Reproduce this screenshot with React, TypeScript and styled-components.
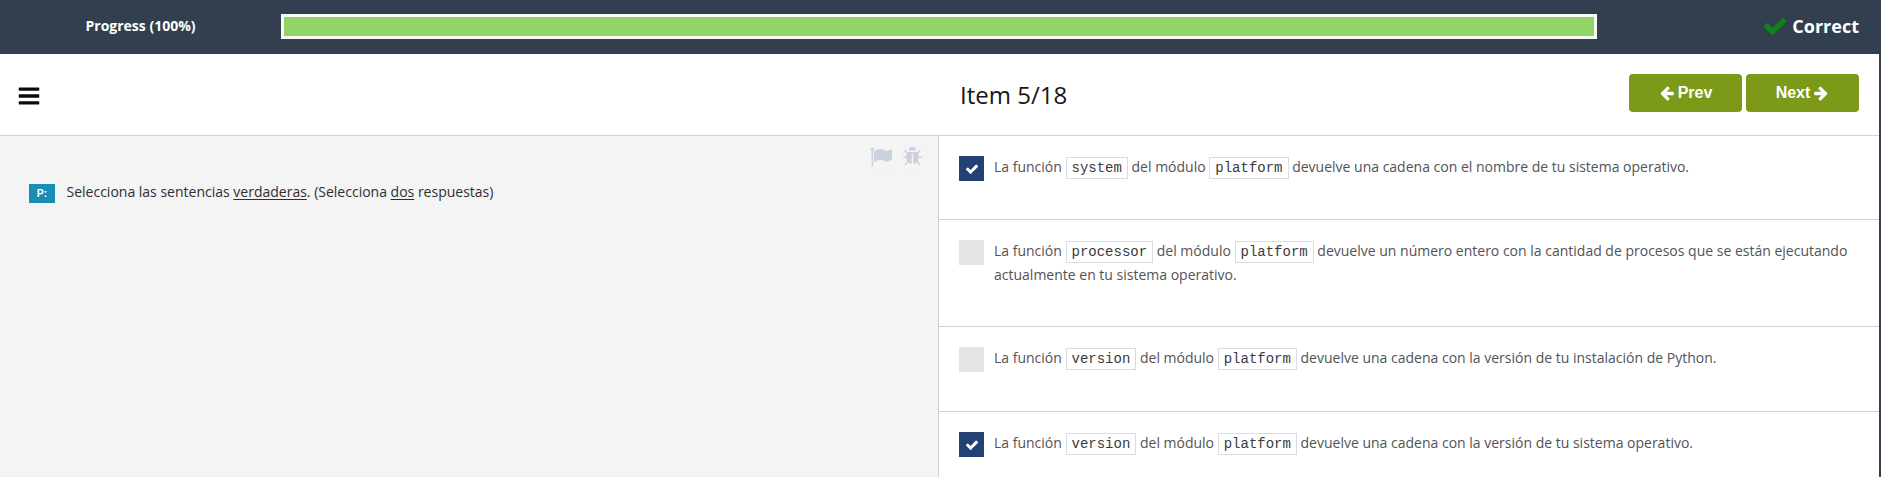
import React from 'react';
import styled, { createGlobalStyle } from 'styled-components';

const GlobalStyle = createGlobalStyle`
  *, *::before, *::after { box-sizing: border-box; }
  html, body { margin: 0; padding: 0; height: 100%; overflow: hidden; background: #313f4e; }
  body { font-family: "Open Sans", sans-serif; font-size: 14px; color: #222; }
`;

const ICONS = {
  check:
    'M1671 566q0 40-28 68l-724 724-136 136q-28 28-68 28t-68-28l-136-136-362-362q-28-28-28-68t28-68l136-136q28-28 68-28t68 28l294 295 656-657q28-28 68-28t68 28l136 136q28 28 28 68z',
  left:
    'M1664 896v128q0 53-32.5 90.5t-84.5 37.5h-704l293 294q38 36 38 90t-38 90l-75 76q-37 37-90 37-52 0-91-37l-651-652q-37-37-37-90 0-52 37-91l651-650q38-38 91-38 52 0 90 38l75 74q38 38 38 91t-38 91l-293 293h704q52 0 84.5 37.5t32.5 90.5z',
  right:
    'M1600 960q0 54-37 91l-651 651q-39 37-91 37-51 0-90-37l-75-75q-38-38-38-91t38-91l293-293h-704q-52 0-84.5-37.5t-32.5-90.5v-128q0-53 32.5-90.5t84.5-37.5h704l-293-294q-38-36-38-90t38-90l75-75q38-38 90-38 53 0 91 38l651 651q37 35 37 90z',
  bars:
    'M1664 1344v128q0 26-19 45t-45 19h-1408q-26 0-45-19t-19-45v-128q0-26 19-45t45-19h1408q26 0 45 19t19 45zm0-512v128q0 26-19 45t-45 19h-1408q-26 0-45-19t-19-45v-128q0-26 19-45t45-19h1408q26 0 45 19t19 45zm0-512v128q0 26-19 45t-45 19h-1408q-26 0-45-19t-19-45v-128q0-26 19-45t45-19h1408q26 0 45 19t19 45z',
  flag:
    'M320 256q0 72-64 110v1266q0 13-9.5 22.5t-22.5 9.5h-64q-13 0-22.5-9.5t-9.5-22.5v-1266q-64-38-64-110 0-53 37.5-90.5t90.5-37.5 90.5 37.5 37.5 90.5zm1472 64v763q0 25-12.5 38.5t-39.5 27.5q-215 116-369 116-61 0-123.5-22t-108.5-48-115.5-48-142.5-22q-192 0-464 146-17 9-33 9-26 0-45-19t-19-45v-742q0-32 31-55 21-14 79-43 236-120 421-120 107 0 200 29t219 88q38 19 88 19 54 0 117.5-21t110-47 88-47 54.5-21q26 0 45 19t19 45z',
  bug:
    'M1696 960q0 26-19 45t-45 19h-224q0 171-67 290l208 209q19 19 19 45t-19 45q-18 19-45 19t-45-19l-198-197q-5 5-15 13t-42 28.5-65 36.5-82 29-97 13v-896h-128v896q-51 0-101.5-13.5t-87-33-66-39-43.5-32.5l-15-14-183 207q-20 21-48 21-24 0-43-16-19-18-20.5-44.5t15.5-46.5l202-227q-58-114-58-274h-224q-26 0-45-19t-19-45 19-45 45-19h224v-294l-173-173q-19-19-19-45t19-45 45-19 45 19l173 173h844l173-173q19-19 45-19t45 19 19 45-19 45l-173 173v294h224q26 0 45 19t19 45zm-480-576h-640q0-133 93.5-226.5t226.5-93.5 226.5 93.5 93.5 226.5z',
};

const Svg = styled.svg<{ $size: number }>`
  display: block;
  flex: none;
  width: ${(p) => p.$size}px;
  height: ${(p) => p.$size}px;
  fill: currentColor;
`;

function Icon({ name, size }: { name: keyof typeof ICONS; size: number }) {
  return (
    <Svg $size={size} viewBox="0 0 1792 1792" aria-hidden="true">
      <path d={ICONS[name]} />
    </Svg>
  );
}

const Page = styled.div`
  display: flex;
  flex-direction: column;
  height: 477px;
`;

const TopBar = styled.header`
  display: flex;
  flex: none;
  height: 54px;
  padding: 0 22px 0 0;
  background: #313f4e;
  color: #fff;
`;

const ProgressLabel = styled.div`
  width: 281px;
  padding-top: 16px;
  text-align: center;
  font-size: 14px;
  line-height: 20px;
  font-weight: 700;
`;

const ProgressTrack = styled.div`
  width: 1316px;
  height: 25px;
  margin-top: 14px;
  border: 3px solid #f7faf6;
`;

const ProgressFill = styled.div`
  height: 100%;
  background: #90d468;
`;

const Result = styled.div`
  display: flex;
  align-items: center;
  gap: 4px;
  height: 27px;
  margin: 12px 0 0 auto;
  font-size: 18px;
  font-weight: 700;
`;

const ResultIcon = styled.span`
  color: #0f8116;
`;

const Sheet = styled.main`
  display: flex;
  flex: 1;
  flex-direction: column;
  min-height: 0;
  margin-right: 2px;
  background: #fff;
`;

const Toolbar = styled.div`
  display: grid;
  grid-template-columns: 960px 1fr auto;
  flex: none;
  height: 82px;
  padding-right: 20px;
  border-bottom: 1px solid #d0d1d3;
`;

const MenuButton = styled.button`
  justify-self: start;
  align-self: start;
  margin: 29.5px 0 0 17.3px;
  padding: 0;
  border: 0;
  background: none;
  color: #0b0b0e;
`;

const Title = styled.h1`
  margin: 24px 0 0;
  font-size: 24px;
  line-height: 34px;
  font-weight: 400;
  color: #161616;
`;

const Nav = styled.nav`
  display: flex;
  gap: 4px;
  padding-top: 20px;
`;

const NavButton = styled.button`
  display: flex;
  align-items: center;
  justify-content: center;
  gap: 3px;
  width: 113px;
  height: 38px;
  padding: 0 0 1px;
  border: 0;
  border-radius: 4px;
  background: #7c9a18;
  color: #fff;
  font: 700 16px "Liberation Sans", Arial, sans-serif;
`;

const Columns = styled.div`
  display: grid;
  grid-template-columns: 939px 1fr;
  flex: 1;
  min-height: 0;
`;

const QuestionPane = styled.section`
  padding: 10px 15px 0 29px;
  border-right: 1px solid #cfd0d2;
  background: #f4f4f4;
`;

const Tools = styled.div`
  display: flex;
  justify-content: flex-end;
  gap: 6px;
  height: 38px;
`;

const Tool = styled.span<{ $width: number }>`
  width: ${(p) => p.$width}px;
  height: 25px;
  border-bottom: 1px dotted #e8e9ed;
  color: #cbd2de;
`;

const Question = styled.div`
  display: flex;
  gap: 11.5px;
`;

const Badge = styled.span`
  width: 26px;
  height: 19px;
  background: #198eb5;
  color: #fff;
  font: 700 10.5px/18px "Liberation Sans", Arial, sans-serif;
  text-align: center;
`;

const QuestionText = styled.p`
  margin: -4px 0 0;
  font-size: 14px;
  line-height: 24px;
  color: #2e2f33;

  u {
    text-underline-offset: 2px;
  }
`;

const Answers = styled.section`
  display: grid;
  grid-template-rows: 84px 107px 85px 85px;
  overflow: hidden;
`;

const Answer = styled.label`
  display: flex;
  gap: 10px;
  padding: 20px 20px 0;
  border-bottom: 1px solid #cfd0d2;
`;

const Box = styled.span<{ $on: boolean }>`
  display: flex;
  align-items: center;
  justify-content: center;
  flex: none;
  width: 25px;
  height: 25px;
  padding-top: 1px;
  background: ${(p) => (p.$on ? '#234172' : '#e4e4e4')};
  color: #fff;
`;

const AnswerText = styled.p`
  margin: -1px 0 0;
  font-size: 14px;
  line-height: 24px;
  color: #525356;
`;

const Code = styled.code`
  padding: 2px 5px;
  border: 1px solid #dadcdf;
  font-family: "Liberation Mono", "Courier New", monospace;
  font-size: 14px;
  line-height: 1;
  color: #3a3a3e;
`;

const answers = [
  { on: true, fn: 'system', text: 'devuelve una cadena con el nombre de tu sistema operativo.' },
  {
    on: false,
    fn: 'processor',
    text: 'devuelve un número entero con la cantidad de procesos que se están ejecutando actualmente en tu sistema operativo.',
  },
  { on: false, fn: 'version', text: 'devuelve una cadena con la versión de tu instalación de Python.' },
  { on: true, fn: 'version', text: 'devuelve una cadena con la versión de tu sistema operativo.' },
];

export default function App() {
  return (
    <Page>
      <GlobalStyle />
      <TopBar>
        <ProgressLabel>Progress (100%)</ProgressLabel>
        <ProgressTrack>
          <ProgressFill />
        </ProgressTrack>
        <Result>
          <ResultIcon>
            <Icon name="check" size={26} />
          </ResultIcon>
          Correct
        </Result>
      </TopBar>
      <Sheet>
        <Toolbar>
          <MenuButton aria-label="Menu">
            <Icon name="bars" size={24} />
          </MenuButton>
          <Title>Item 5/18</Title>
          <Nav>
            <NavButton>
              <Icon name="left" size={16} />
              Prev
            </NavButton>
            <NavButton>
              Next
              <Icon name="right" size={16} />
            </NavButton>
          </Nav>
        </Toolbar>
        <Columns>
          <QuestionPane>
            <Tools>
              <Tool $width={26}>
                <Icon name="flag" size={22} />
              </Tool>
              <Tool $width={21}>
                <Icon name="bug" size={21} />
              </Tool>
            </Tools>
            <Question>
              <Badge>P:</Badge>
              <QuestionText>
                Selecciona las sentencias <u>verdaderas</u>. (Selecciona <u>dos</u> respuestas)
              </QuestionText>
            </Question>
          </QuestionPane>
          <Answers>
            {answers.map((a, i) => (
              <Answer key={i}>
                <Box $on={a.on}>{a.on && <Icon name="check" size={14} />}</Box>
                <AnswerText>
                  La función <Code>{a.fn}</Code> del módulo <Code>platform</Code> {a.text}
                </AnswerText>
              </Answer>
            ))}
          </Answers>
        </Columns>
      </Sheet>
    </Page>
  );
}
